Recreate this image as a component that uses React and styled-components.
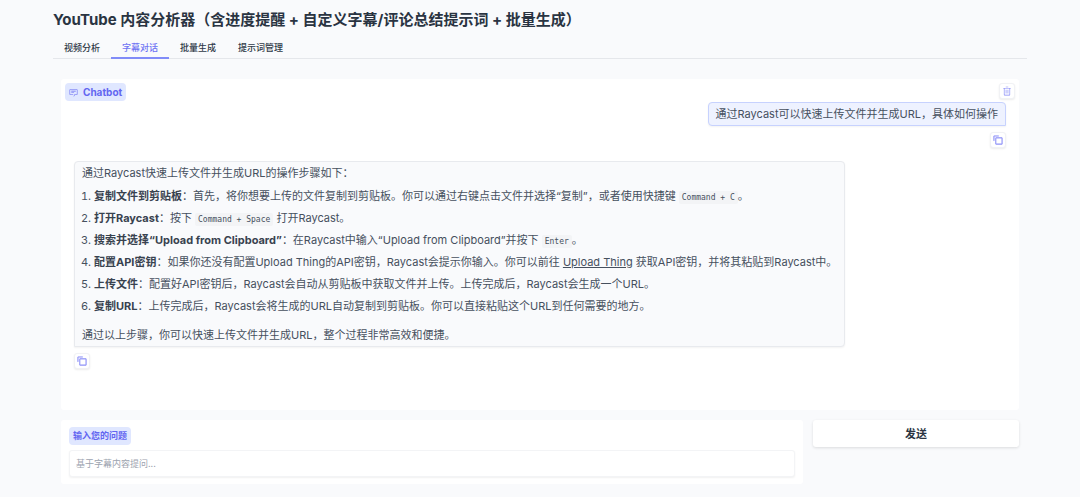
import React, { useState } from "react";
import styled, { createGlobalStyle } from "styled-components";

const GlobalStyle = createGlobalStyle`
* {
    box-sizing: border-box;
}
body {
    margin: 0;
    background-color: #f9fafc;
    color: #1f2937;
    font-family: Inter, "Noto Sans CJK SC", sans-serif;
    font-size: 11px;
}
button, input {
    font-family: inherit;
}
`

const Page = styled.main`
padding: 9px 53px 12px;
`

const Title = styled.h1`
margin: 0;
font-size: 15px;
line-height: 22px;
font-weight: 700;
color: #2a3442;
`

const TabList = styled.div`
display: flex;
margin-top: 7px;
border-bottom: 1px solid #e5e7eb;
`

const Tab = styled.button`
height: 21px;
margin-bottom: -1px;
padding: 0 11px;
border: 0;
border-bottom: 2px solid ${(props) => (props.$active ? "#818cf8" : "transparent")};
background: none;
color: ${(props) => (props.$active ? "#6f74f3" : "#2f3947")};
font-size: 9px;
font-weight: 500;
line-height: 18px;
cursor: pointer;
`

const Panel = styled.section`
padding: 20px 8px 0;
`

const ChatBox = styled.div`
padding: 4px;
background-color: #fff;
border-radius: 3px;
`

const ChatHeader = styled.div`
display: flex;
align-items: flex-start;
justify-content: space-between;
height: 19px;
`

const Chip = styled.span`
display: inline-flex;
align-items: center;
gap: 5px;
height: 18px;
padding: 0 4px;
border-radius: 4px;
background-color: #e0e7ff;
color: #6366f1;
font-size: ${(props) => (props.$small ? "9px" : "10px")};
font-weight: 700;
line-height: 18px;
`

const IconButton = styled.button`
display: flex;
align-items: center;
justify-content: center;
width: 16px;
height: 16px;
padding: 0;
border: 1px solid #f1f2f5;
border-radius: 3px;
background-color: #fff;
box-shadow: 0 1px 2px rgba(0, 0, 0, 0.08);
color: #8185f7;
cursor: pointer;
`

const Messages = styled.div`
display: flex;
flex-direction: column;
min-height: 304px;
padding: 0 9px;
`

const Message = styled.div`
display: flex;
flex-direction: column;
align-items: ${(props) => (props.$user ? "flex-end" : "flex-start")};
gap: 6px;
margin-bottom: 13px;
`

const Bubble = styled.div`
padding: 2px 7px;
border: 1px solid ${(props) => (props.$user ? "#c7d2fe" : "#e8eaee")};
border-radius: ${(props) => (props.$user ? "4px 4px 0 4px" : "4px 4px 4px 0")};
background-color: ${(props) => (props.$user ? "#eef2ff" : "#f9fafc")};
box-shadow: 0 1px 2px rgba(0, 0, 0, 0.05);
color: #46505e;
line-height: 18px;
`

const Paragraph = styled.p`
margin: 0;
`

const Steps = styled.ol`
display: flex;
flex-direction: column;
gap: 4px;
margin: 5px 0 11px;
padding: 0 0 0 12px;

strong {
    font-weight: 700;
    color: #38424f;
}
`

const Code = styled.code`
padding: 2px 3px;
border-radius: 2px;
background-color: #f3f4f6;
font-family: "DejaVu Sans Mono", monospace;
font-size: 8px;
line-height: 1;
`

const TextLink = styled.a`
color: inherit;
text-decoration: underline;
`

const AskRow = styled.form`
display: grid;
grid-template-columns: 18fr 5fr;
align-items: start;
gap: 10px;
margin-top: 10px;
`

const Field = styled.div`
display: flex;
flex-direction: column;
align-items: flex-start;
gap: 5px;
padding: 7px 8px;
border-radius: 3px;
background-color: #fff;
`

const FieldLabel = styled.label`
display: flex;
`

const TextInput = styled.input`
width: 100%;
height: 27px;
padding: 0 6px;
border: 1px solid #f3f4f6;
border-radius: 3px;
background-color: #fff;
box-shadow: 0 1px 2px rgba(0, 0, 0, 0.06);
color: #1f2937;
font-size: 9px;

&::placeholder {
    color: #9ca3af;
}
`

const SendButton = styled.button`
height: 27px;
padding: 0 6px 2px;
border: 0;
border-radius: 3px;
background-color: #fff;
box-shadow: 0 1px 3px rgba(0, 0, 0, 0.12);
color: #2a3442;
font-size: 11px;
font-weight: 700;
cursor: pointer;
`

const ChatIcon = () => (
    <svg width="9" height="9" viewBox="0 0 32 32" fill="currentColor" aria-hidden="true">
        <path d="M17.74 30 16 29l4-7h8V6H4v16h11v2H4a2 2 0 0 1-2-2V6a2 2 0 0 1 2-2h24a2 2 0 0 1 2 2v16a2 2 0 0 1-2 2h-6.84Z" />
        <path d="M8 10h16v2H8zm0 6h10v2H8z" />
    </svg>
)

const TrashIcon = () => (
    <svg width="10" height="10" viewBox="0 0 32 32" fill="currentColor" aria-hidden="true">
        <path d="M12 12h2v12h-2zM18 12h2v12h-2z" />
        <path d="M4 6v2h2v20a2 2 0 0 0 2 2h16a2 2 0 0 0 2-2V8h2V6zM8 28V8h16v20zM12 2h8v2h-8z" />
    </svg>
)

const CopyIcon = () => (
    <svg width="10" height="10" viewBox="0 0 32 32" fill="currentColor" stroke="currentColor" aria-hidden="true">
        <path d="M28 10v18H10V10h18m0-2H10a2 2 0 0 0-2 2v18a2 2 0 0 0 2 2h18a2 2 0 0 0 2-2V10a2 2 0 0 0-2-2Z" />
        <path d="M4 18H2V4a2 2 0 0 1 2-2h14v2H4Z" />
    </svg>
)

const tabs = ["视频分析", "字幕对话", "批量生成", "提示词管理"];

const App = () => {

    const [activeTab, setActiveTab] = useState("字幕对话")
    const [question, setQuestion] = useState("")

    return (
        <Page>
            <GlobalStyle />
            <Title>YouTube 内容分析器（含进度提醒 + 自定义字幕/评论总结提示词 + 批量生成）</Title>
            <TabList role="tablist">
                {tabs.map((tab) => (
                    <Tab key={tab} type="button" role="tab" aria-selected={tab === activeTab}
                        $active={tab === activeTab} onClick={() => setActiveTab(tab)}>
                        {tab}
                    </Tab>
                ))}
            </TabList>
            <Panel>
                <ChatBox>
                    <ChatHeader>
                        <Chip><ChatIcon />Chatbot</Chip>
                        <IconButton type="button" aria-label="Clear"><TrashIcon /></IconButton>
                    </ChatHeader>
                    <Messages>
                        <Message $user>
                            <Bubble $user>通过Raycast可以快速上传文件并生成URL，具体如何操作</Bubble>
                            <IconButton type="button" aria-label="Copy"><CopyIcon /></IconButton>
                        </Message>
                        <Message>
                            <Bubble>
                                <Paragraph>通过Raycast快速上传文件并生成URL的操作步骤如下：</Paragraph>
                                <Steps>
                                    <li><strong>复制文件到剪贴板</strong>：首先，将你想要上传的文件复制到剪贴板。你可以通过右键点击文件并选择“复制”，或者使用快捷键 <Code>Command + C</Code>。</li>
                                    <li><strong>打开Raycast</strong>：按下 <Code>Command + Space</Code> 打开Raycast。</li>
                                    <li><strong>搜索并选择“Upload from Clipboard”</strong>：在Raycast中输入“Upload from Clipboard”并按下 <Code>Enter</Code>。</li>
                                    <li><strong>配置API密钥</strong>：如果你还没有配置Upload Thing的API密钥，Raycast会提示你输入。你可以前往 <TextLink href="#">Upload Thing</TextLink> 获取API密钥，并将其粘贴到Raycast中。</li>
                                    <li><strong>上传文件</strong>：配置好API密钥后，Raycast会自动从剪贴板中获取文件并上传。上传完成后，Raycast会生成一个URL。</li>
                                    <li><strong>复制URL</strong>：上传完成后，Raycast会将生成的URL自动复制到剪贴板。你可以直接粘贴这个URL到任何需要的地方。</li>
                                </Steps>
                                <Paragraph>通过以上步骤，你可以快速上传文件并生成URL，整个过程非常高效和便捷。</Paragraph>
                            </Bubble>
                            <IconButton type="button" aria-label="Copy"><CopyIcon /></IconButton>
                        </Message>
                    </Messages>
                </ChatBox>
                <AskRow onSubmit={(e) => e.preventDefault()}>
                    <Field>
                        <FieldLabel htmlFor="question"><Chip $small>输入您的问题</Chip></FieldLabel>
                        <TextInput id="question" type="text" placeholder="基于字幕内容提问..."
                            value={question} onChange={(e) => setQuestion(e.target.value)} />
                    </Field>
                    <SendButton type="submit">发送</SendButton>
                </AskRow>
            </Panel>
        </Page>
    )
}

export default App;
